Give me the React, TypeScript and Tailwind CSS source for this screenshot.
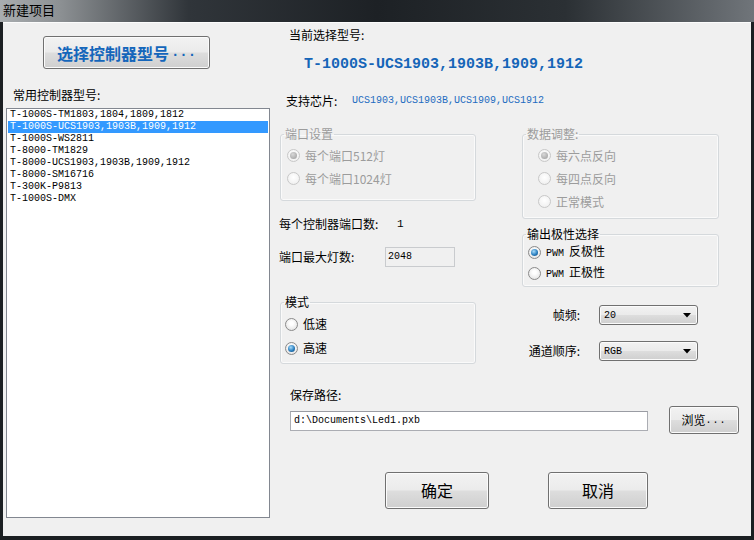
import React from "react";

const MONO = "font-['Liberation_Mono','Noto_Sans_CJK_SC',monospace]";
const CJK = "font-['Noto_Sans_CJK_SC','Noto_Sans',sans-serif]";

const BTN =
  "rounded-[3px] border border-[#707070] bg-[linear-gradient(to_bottom,#f2f2f2_0%,#ebebeb_48%,#dddddd_52%,#cfcfcf_100%)] shadow-[inset_0_0_0_1px_#fbfbfb] flex items-center justify-center";

const models = [
  "T-1000S-TM1803,1804,1809,1812",
  "T-1000S-UCS1903,1903B,1909,1912",
  "T-1000S-WS2811",
  "T-8000-TM1829",
  "T-8000-UCS1903,1903B,1909,1912",
  "T-8000-SM16716",
  "T-300K-P9813",
  "T-1000S-DMX",
];

function Radio({ checked, disabled }: { checked?: boolean; disabled?: boolean }) {
  const ring = disabled
    ? "border-[#c8c8c8] bg-[radial-gradient(circle_at_50%_40%,#ffffff,#ececec)]"
    : "border-[#8a8a8a] bg-[radial-gradient(circle_at_50%_40%,#ffffff_20%,#dcdcdc)]";
  const dot = disabled
    ? "bg-[radial-gradient(circle_at_40%_35%,#d8d8d8,#9a9a9a)]"
    : "bg-[radial-gradient(circle_at_40%_35%,#a8dcfa,#2a7fc0_55%,#0b3d6c)]";
  return (
    <span className={`w-[13px] h-[13px] rounded-full border ${ring} flex items-center justify-center shrink-0`}>
      {checked && <span className={`w-[7px] h-[7px] rounded-full ${dot}`} />}
    </span>
  );
}

function Option({ label, checked, disabled, rowH, indent }: { label: React.ReactNode; checked?: boolean; disabled?: boolean; rowH: string; indent: string }) {
  return (
    <div className={`flex items-center gap-[5px] ${rowH} ${indent} ${disabled ? "text-[#9c9c9c]" : "text-black"}`}>
      <Radio checked={checked} disabled={disabled} />
      <span className="leading-[14px]">{label}</span>
    </div>
  );
}

function Group({ title, disabled, className, children }: { title: string; disabled?: boolean; className: string; children: React.ReactNode }) {
  return (
    <fieldset className={`border border-[#d5d9dc] rounded-[3px] shadow-[inset_0_0_0_1px_#fafafa] ${className}`}>
      <legend className={`ml-[3px] px-[1px] leading-[14px] ${disabled ? "text-[#9c9c9c]" : "text-black"}`}>{title}</legend>
      {children}
    </fieldset>
  );
}

function Combo({ value }: { value: string }) {
  return (
    <div className={`w-[99px] h-[20px] ${BTN} !justify-between px-[4px]`}>
      <span className={`${MONO} text-[10px]`}>{value}</span>
      <svg width="8" height="5" viewBox="0 0 8 5" className="mr-[2px]">
        <polygon points="0,0 8,0 4,4.5" fill="#000" />
      </svg>
    </div>
  );
}

export default function App() {
  return (
    <div className={`w-[754px] h-[540px] bg-[#1b1f22] ${CJK} text-[12px] text-black overflow-hidden`}>
      {/* title bar */}
      <div className="h-[22px] pl-[3px] pt-[1px] bg-[linear-gradient(90deg,#a9adb0_0%,#8c9093_8%,#30353a_25%,#1d2125_50%,#2b3034_75%,#70757a_100%)]">
        <span className="text-[13px] leading-[16px] text-black">新建项目</span>
      </div>

      <div className="ml-[3px] w-[748px] h-[514px] bg-[#f0f0f0] border-t border-[#fcfcfc] flex">
        {/* left column */}
        <div className="w-[270px] shrink-0 flex flex-col">
          <button className={`${BTN} mt-[13px] ml-[40px] w-[167px] h-[33px] text-[#1466bb] font-bold text-[16px]`}>
            选择控制器型号<span className={`${MONO} text-[14px] ml-[2px]`}>...</span>
          </button>
          <div className="mt-[19px] ml-[10px] leading-[14px]">常用控制器型号:</div>
          <div className="mt-[6px] ml-[3px] w-[264px] h-[410px] border border-[#828790] bg-white">
            {models.map((m, i) => (
              <div
                key={m}
                className={`h-[12px] mx-[1px] px-[2px] leading-[12px] ${MONO} text-[10px] ${i === 1 ? "bg-[#3399ff] text-white" : "text-black"}`}
              >
                {m}
              </div>
            ))}
          </div>
        </div>

        {/* right column */}
        <div className="flex-1 flex flex-col">
          <div className="mt-[5px] ml-[16px] leading-[14px]">当前选择型号:</div>
          <div className={`mt-[14px] ml-[31px] leading-[18px] ${MONO} font-bold text-[15px] text-[#1565b8]`}>
            T-1000S-UCS1903,1903B,1909,1912
          </div>
          <div className="mt-[20px] ml-[13px] flex items-center leading-[14px]">
            <span className="w-[66px]">支持芯片:</span>
            <span className={`${MONO} text-[10px] text-[#1e6cc0]`}>UCS1903,UCS1903B,UCS1909,UCS1912</span>
          </div>

          <div className="mt-[19px] flex">
            <div className="w-[249px] flex flex-col">
              <Group title="端口设置" disabled className="ml-[7px] w-[196px] pt-[3px] pb-[10px]">
                <Option label="每个端口512灯" checked disabled rowH="h-[23px]" indent="ml-[6px]" />
                <Option label="每个端口1024灯" disabled rowH="h-[23px]" indent="ml-[6px]" />
              </Group>
              <div className="mt-[16px] ml-[6px] flex leading-[14px]">
                <span className="w-[118px]">每个控制器端口数:</span>
                <span className={`${MONO} text-[11px]`}>1</span>
              </div>
              <div className="mt-[16px] ml-[6px] flex items-center h-[20px]">
                <span className="w-[106px]">端口最大灯数:</span>
                <div className={`w-[70px] h-[20px] border border-[#c9cbce] bg-[#f0f0f0] px-[2px] leading-[18px] ${MONO} text-[10px]`}>2048</div>
              </div>
              <Group title="模式" className="mt-[28px] ml-[7px] w-[196px] pt-[3px] pb-[3px]">
                <Option label="低速" rowH="h-[24px]" indent="ml-[4px]" />
                <Option label="高速" checked rowH="h-[24px]" indent="ml-[4px]" />
              </Group>
            </div>

            <div className="w-[197px] flex flex-col">
              <Group title="数据调整:" disabled className="w-[197px] pt-[3px] pb-[5px]">
                <Option label="每六点反向" checked disabled rowH="h-[23px]" indent="ml-[15px]" />
                <Option label="每四点反向" disabled rowH="h-[23px]" indent="ml-[15px]" />
                <Option label="正常模式" disabled rowH="h-[23px]" indent="ml-[15px]" />
              </Group>
              <Group title="输出极性选择" className="mt-[8px] w-[197px] pt-[1px] pb-[2px]">
                <Option
                  label={<><span className={`${MONO} text-[10px] mr-[5px]`}>PWM</span>反极性</>}
                  checked
                  rowH="h-[21px]"
                  indent="ml-[5px]"
                />
                <Option
                  label={<><span className={`${MONO} text-[10px] mr-[5px]`}>PWM</span>正极性</>}
                  rowH="h-[21px]"
                  indent="ml-[5px]"
                />
              </Group>
              <div className="mt-[18px] flex items-center h-[20px]">
                <span className="w-[58px] text-right">帧频:</span>
                <div className="ml-[19px]"><Combo value="20" /></div>
              </div>
              <div className="mt-[16px] flex items-center h-[20px]">
                <span className="w-[58px] text-right">通道顺序:</span>
                <div className="ml-[19px]"><Combo value="RGB" /></div>
              </div>
            </div>
          </div>

          <div className="mt-[24px] ml-[17px] leading-[14px]">保存路径:</div>
          <div className="mt-[4px] flex items-start h-[28px]">
            <div className={`mt-[5px] ml-[17px] w-[358px] h-[20px] border border-[#abadb3] border-t-[#9a9ca3] bg-white px-[3px] leading-[18px] ${MONO} text-[10px]`}>
              d:\Documents\Led1.pxb
            </div>
            <button className={`${BTN} ml-[21px] w-[70px] h-[28px] text-[12px]`}>
              浏览<span className={`${MONO} text-[10px] tracking-[1px]`}>...</span>
            </button>
          </div>

          <div className="mt-[38px] flex">
            <button className={`${BTN} ml-[112px] w-[104px] h-[37px] text-[16px] pb-[2px]`}>确定</button>
            <button className={`${BTN} ml-[59px] w-[100px] h-[37px] text-[16px] pb-[2px]`}>取消</button>
          </div>
        </div>
      </div>
    </div>
  );
}
